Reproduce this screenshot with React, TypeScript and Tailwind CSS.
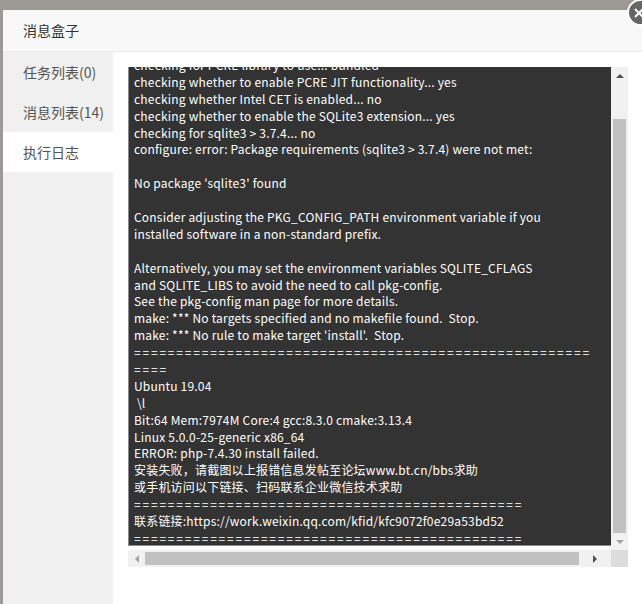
import React from 'react';

const eq = (n: number) => '='.repeat(n);

const logLines = [
  'checking for PCRE library to use... bundled',
  'checking whether to enable PCRE JIT functionality... yes',
  'checking whether Intel CET is enabled... no',
  'checking whether to enable the SQLite3 extension... yes',
  'checking for sqlite3 > 3.7.4... no',
  'configure: error: Package requirements (sqlite3 > 3.7.4) were not met:',
  '',
  "No package 'sqlite3' found",
  '',
  'Consider adjusting the PKG_CONFIG_PATH environment variable if you',
  'installed software in a non-standard prefix.',
  '',
  'Alternatively, you may set the environment variables SQLITE_CFLAGS',
  'and SQLITE_LIBS to avoid the need to call pkg-config.',
  'See the pkg-config man page for more details.',
  'make: *** No targets specified and no makefile found.  Stop.',
  "make: *** No rule to make target 'install'.  Stop.",
  eq(54),
  eq(4),
  'Ubuntu 19.04',
  ' \\l',
  'Bit:64 Mem:7974M Core:4 gcc:8.3.0 cmake:3.13.4',
  'Linux 5.0.0-25-generic x86_64',
  'ERROR: php-7.4.30 install failed.',
  '安装失败，请截图以上报错信息发帖至论坛www.bt.cn/bbs求助',
  '或手机访问以下链接、扫码联系企业微信技术求助',
  eq(46),
  '联系链接:https://work.weixin.qq.com/kfid/kfc9072f0e29a53bd52',
  eq(46),
];

const tabs = ['任务列表(0)', '消息列表(14)', '执行日志'];

export default function App() {
  return (
    <div
      className="relative w-[642px] h-[604px] overflow-hidden bg-[#9d9a95] pt-[10px] pl-[3px]"
      style={{ fontFamily: '"Noto Sans CJK SC", "Noto Sans", sans-serif' }}
    >
      <div className="flex flex-col h-full bg-white">
        {/* Header */}
        <div className="h-[42px] shrink-0 bg-[#f8f8f8] border-b border-[#ebebeb] flex items-center pl-5 text-[14px] text-[#333]">
          消息盒子
        </div>

        <div className="flex flex-1">
          {/* Sidebar */}
          <div className="w-[110px] bg-[#f0f0f0]">
            {tabs.map((t, i) => (
              <div
                key={t}
                className={`h-10 flex items-center pl-5 text-[14px] text-[#555] ${i === 2 ? 'bg-white' : ''}`}
              >
                {t}
              </div>
            ))}
          </div>

          {/* Content */}
          <div className="flex-1 pt-[15px] pl-[15px]">
            <div className="w-[500px] h-[500px] grid grid-cols-[483px_17px] grid-rows-[483px_17px]">
              <div className="bg-[#333] border-l border-b-[1px] border-[#8a8a8a] overflow-hidden text-white text-[12px] tracking-[0.2px] mb-[4px]">
                <div className="-mt-[10px] pl-[5px]">
                  {logLines.map((l, i) => (
                    <div
                      key={i}
                      className={`h-[16.9px] leading-[16.9px] whitespace-pre ${l.startsWith('==') ? 'tracking-[1.8px]' : ''}`}
                    >
                      {l}
                    </div>
                  ))}
                </div>
              </div>
              {/* vertical scrollbar */}
              <div className="bg-[#f1f1f1] flex flex-col items-center">
                <div className="h-[17px] flex items-center justify-center">
                  <div className="w-0 h-0 border-l-[4px] border-r-[4px] border-b-[4px] border-l-transparent border-r-transparent border-b-[#505050]" />
                </div>
                <div className="mt-[35px] w-[13px] h-[414px] bg-[#c1c1c1]" />
                <div className="flex-1 flex items-center justify-center">
                  <div className="w-0 h-0 border-l-[4px] border-r-[4px] border-t-[4px] border-l-transparent border-r-transparent border-t-[#a3a3a3]" />
                </div>
              </div>
              {/* horizontal scrollbar */}
              <div className="bg-[#f1f1f1] flex items-center">
                <div className="w-[17px] flex items-center justify-center">
                  <div className="w-0 h-0 border-t-[4px] border-b-[4px] border-r-[4px] border-t-transparent border-b-transparent border-r-[#a3a3a3]" />
                </div>
                <div className="w-[434px] h-[13px] bg-[#c1c1c1]" />
                <div className="flex-1 flex items-center justify-center">
                  <div className="w-0 h-0 border-t-[4px] border-b-[4px] border-l-[4px] border-t-transparent border-b-transparent border-l-[#505050]" />
                </div>
              </div>
              <div className="bg-[#dcdcdc]" />
            </div>
          </div>
        </div>
      </div>

      {/* close button */}
      <div className="absolute -right-[12px] -top-[1px] w-[27px] h-[27px] rounded-full bg-[#666] border-2 border-white flex items-center justify-center">
        <svg width="12" height="12" viewBox="0 0 12 12" className="-ml-[4px]">
          <path d="M2 2L10 10M10 2L2 10" stroke="white" strokeWidth="2" />
        </svg>
      </div>
    </div>
  );
}
